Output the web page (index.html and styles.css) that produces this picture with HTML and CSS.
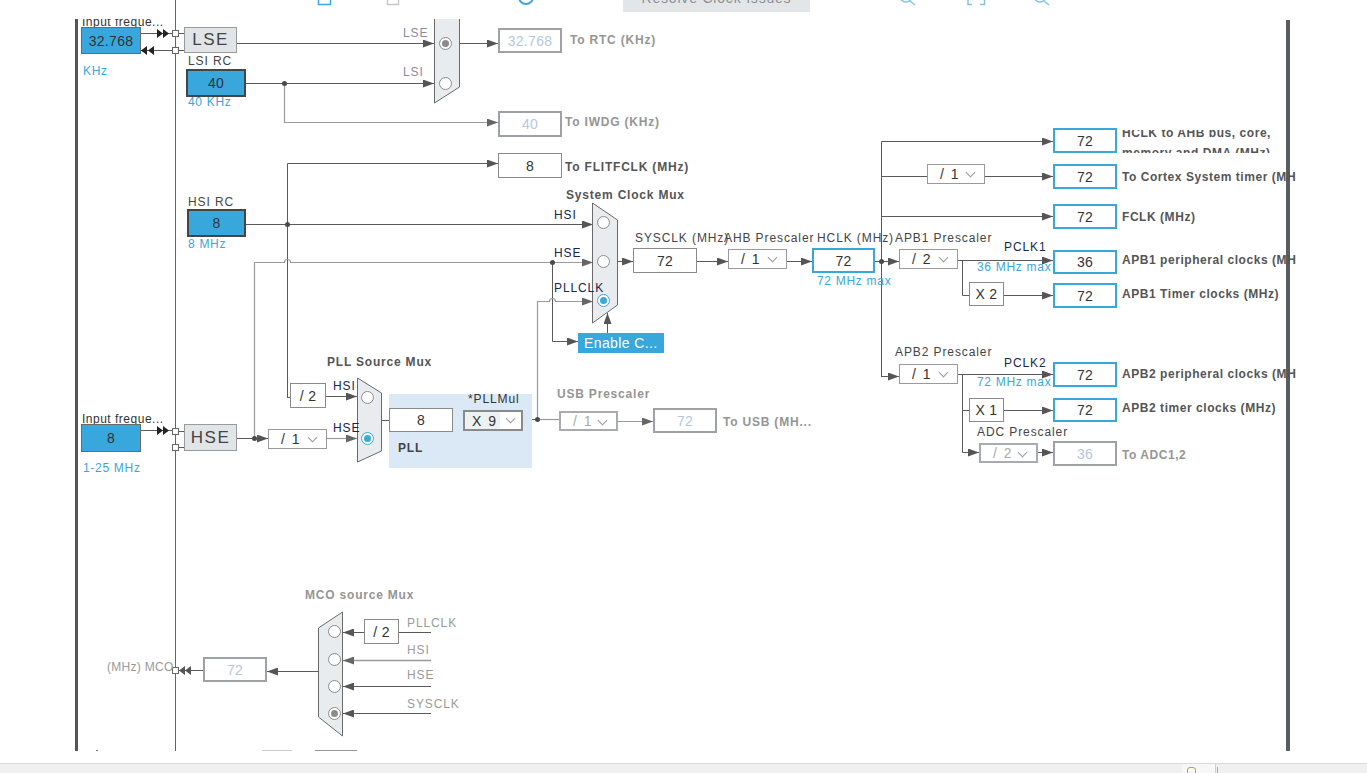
FILE: index.html
```html
<!DOCTYPE html>
<html>
<head>
<meta charset="utf-8">
<title>Clock Configuration</title>
<link rel="stylesheet" href="styles.css">
</head>
<body>
<div class="app">
  <div class="toolbar">
    <svg class="tb-svg" width="1367" height="19" viewBox="0 0 1367 19">
      <path d="M318.5,-2 V4.5 H330.5 V-2" stroke="#3aa8dc" stroke-width="1.5" fill="none"/>
      <path d="M387.5,-2 V4.5 H398.5 V-2" stroke="#c8c8c8" stroke-width="1.5" fill="none"/>
      <circle cx="526" cy="-3" r="7" stroke="#3aa8dc" stroke-width="2" fill="none"/>
      <circle cx="906" cy="-4" r="6" stroke="#7fc3e8" stroke-width="1.5" fill="none"/>
      <path d="M910,1 L915,5" stroke="#7fc3e8" stroke-width="1.5"/>
      <path d="M968,-2 V4.5 H972 M980,4.5 H984.5 V-2" stroke="#7fc3e8" stroke-width="1.5" fill="none"/>
      <circle cx="1040" cy="-4" r="6" stroke="#7fc3e8" stroke-width="1.5" fill="none"/>
      <path d="M1044,1 L1049,5" stroke="#7fc3e8" stroke-width="1.5"/>
      <line x1="175.5" y1="0" x2="175.5" y2="19" stroke="#666"/>
    </svg>
    <div class="resolve"><span>Resolve Clock Issues</span></div>
  </div>

  <div class="main">
    <div class="board">
      <svg class="wires" width="1367" height="751" viewBox="0 0 1367 751">
        <defs>
          <marker id="ad" viewBox="0 0 11 8" refX="11" refY="4" markerWidth="11" markerHeight="8" markerUnits="userSpaceOnUse" orient="auto">
            <path d="M0,0 L11,4 L0,8 z" fill="#555"/>
          </marker>
          <marker id="al" viewBox="0 0 11 8" refX="11" refY="4" markerWidth="11" markerHeight="8" markerUnits="userSpaceOnUse" orient="auto">
            <path d="M0,0 L11,4 L0,8 z" fill="#666"/>
          </marker>
        </defs>

        <!-- frame bars and bus -->
        <rect x="75" y="18" width="3" height="733" fill="#555"/>
        <rect x="1286" y="20" width="4" height="731" fill="#5b5e61"/>
        <line x1="175.5" y1="0" x2="175.5" y2="751" stroke="#666"/>

        <g fill="none" stroke="#5a5a5a" stroke-width="1">
          <!-- LSE / LSI -->
          <path d="M237,43.5 H434" marker-end="url(#ad)"/>
          <path d="M246,83.5 H434" marker-end="url(#ad)"/>
          <path d="M460,43.5 H498" marker-end="url(#ad)"/>
          <!-- HSI -->
          <path d="M246,224.5 H593" marker-end="url(#ad)"/>
          <path d="M287.5,397.5 V163.5 H498" marker-end="url(#ad)"/>
          <path d="M287,397.5 H290"/>
          <path d="M552.5,262 V341.5 H578" marker-end="url(#ad)"/>
          <path d="M607.5,333 V313" marker-end="url(#ad)"/>
          <path d="M237,438.5 H268" marker-end="url(#ad)"/>
          <path d="M326,396.5 H357" marker-end="url(#ad)"/>
          <path d="M382,420.5 H389"/>
          <path d="M453,420.5 H463"/>
          <path d="M523,419.5 H559"/>
          <path d="M618,261.5 H633" marker-end="url(#ad)"/>
          <path d="M697,261.5 H728" marker-end="url(#ad)"/>
          <path d="M787,261.5 H812" marker-end="url(#ad)"/>
          <path d="M875,261.5 H899" marker-end="url(#ad)"/>
          <path d="M881.5,376.5 V141.5 H1053" marker-end="url(#ad)"/>
          <path d="M881,376.5 H899" marker-end="url(#ad)"/>
          <path d="M881,176.5 H927"/>
          <path d="M985,176.5 H1053" marker-end="url(#ad)"/>
          <path d="M881,216.5 H1053" marker-end="url(#ad)"/>
          <path d="M958,260.5 H1053" marker-end="url(#ad)"/>
          <path d="M962.5,260 V295.5 H969"/>
          <path d="M1004,295.5 H1053" marker-end="url(#ad)"/>
          <path d="M958,374.5 H1053" marker-end="url(#ad)"/>
          <path d="M962.5,374 V452.5 H979" marker-end="url(#ad)"/>
          <path d="M962,410.5 H969"/>
          <path d="M1004,410.5 H1053" marker-end="url(#ad)"/>
          <path d="M1038,452.5 H1053" marker-end="url(#ad)"/>
          <!-- MCO -->
          <path d="M431,632.5 H399"/>
          <path d="M364,632.5 H343" marker-end="url(#ad)"/>
          <path d="M431,686.5 H343" marker-end="url(#ad)"/>
          <path d="M431,713.5 H343" marker-end="url(#ad)"/>
          <path d="M318,671.5 H267" marker-end="url(#ad)"/>
          <path d="M203,670.5 H178"/>
          <!-- pins -->
          <path d="M141,33.5 H172"/>
          <path d="M141,50.5 H172"/>
          <path d="M141,430.5 H172"/>
          <path d="M178,33.5 H184 M178,50.5 H184 M178,431.5 H184 M178,447.5 H184"/>
        </g>

        <g fill="none" stroke="#9a9a9a" stroke-width="1.2">
          <path d="M284.5,83 V122.5 H498" marker-end="url(#al)"/>
          <path d="M254.5,438 V262.5 H284.5 A3,3 0 0 1 290.5,262.5 H593" marker-end="url(#al)"/>
          <path d="M537.5,419 V301.5 H549.5 A3,3 0 0 1 555.5,301.5 H593" marker-end="url(#al)"/>
          <path d="M327,438.5 H357" marker-end="url(#al)"/>
          <path d="M537,419.5 H559"/>
          <path d="M618,421.5 H653" marker-end="url(#al)"/>
          <path d="M431,660.5 H343" stroke-width="1.6" marker-end="url(#al)"/>
        </g>

        <!-- double arrowheads -->
        <g fill="#222">
          <path d="M157,29 L163,33.5 L157,38 z M163,29 L169,33.5 L163,38 z"/>
          <path d="M147,46 L141,50.5 L147,55 z M154,46 L148,50.5 L154,55 z"/>
          <path d="M157,426 L163,430.5 L157,435 z M163,426 L169,430.5 L163,435 z"/>
        </g>
        <g fill="#555">
          <path d="M185,666 L179,670.5 L185,675 z M191,666 L185,670.5 L191,675 z"/>
        </g>

        <!-- pins -->
        <g fill="#fff" stroke="#666">
          <rect x="172.5" y="30.5" width="6" height="6"/>
          <rect x="172.5" y="47.5" width="6" height="6"/>
          <rect x="172.5" y="428.5" width="6" height="6"/>
          <rect x="172.5" y="444.5" width="6" height="6"/>
          <rect x="172.5" y="667.5" width="6" height="6"/>
        </g>

        <!-- muxes -->
        <g fill="#e9ecef" stroke="#6a6a6a">
          <polygon points="434.5,5 459.5,5 459.5,87 434.5,103"/>
          <polygon points="592.5,203 617.5,220 617.5,305 592.5,323"/>
          <polygon points="357.5,378 381.5,393 381.5,451 357.5,462"/>
          <polygon points="318.5,628 342.5,612 342.5,736 318.5,717"/>
        </g>

        <!-- radios -->
        <g fill="#fff" stroke="#8c8c8c">
          <circle cx="445.5" cy="43.5" r="6"/>
          <circle cx="445.5" cy="83.5" r="6"/>
          <circle cx="603.5" cy="222.5" r="6"/>
          <circle cx="603.5" cy="261.5" r="6"/>
          <circle cx="367.5" cy="397.5" r="6"/>
          <circle cx="334.5" cy="631.5" r="6"/>
          <circle cx="334.5" cy="659.5" r="6"/>
          <circle cx="334.5" cy="686.5" r="6"/>
          <circle cx="334.5" cy="713.5" r="6"/>
        </g>
        <g fill="#fff" stroke="#3aa8dc">
          <circle cx="603.5" cy="300.5" r="6"/>
          <circle cx="367.5" cy="438.5" r="6"/>
        </g>
        <circle cx="603.5" cy="300.5" r="3.5" fill="#3aa8dc"/>
        <circle cx="367.5" cy="438.5" r="3.5" fill="#3aa8dc"/>
        <circle cx="445.5" cy="43.5" r="3.5" fill="#8c8c8c"/>
        <circle cx="334.5" cy="713.5" r="3.5" fill="#8c8c8c"/>

        <!-- junction dots -->
        <g fill="#4a4a4a">
          <circle cx="284.5" cy="83.5" r="2.5"/>
          <circle cx="287.5" cy="224.5" r="2.5"/>
          <circle cx="552.5" cy="262.5" r="2.5"/>
          <circle cx="254.5" cy="438.5" r="2.5"/>
          <circle cx="537.5" cy="419.5" r="2.5"/>
          <circle cx="881.5" cy="261.5" r="2.5"/>
        </g>

        <!-- cut-off fragments at bottom edge -->
        <g stroke="#777">
          <path d="M96,750.5 H98"/>
          <path d="M262,750.5 H292" stroke="#ccc"/>
          <path d="M315,750.5 H357" stroke="#999"/>
        </g>
      </svg>

      <!-- LSE / LSI area -->
      <div class="t c-inf1">Input freque...</div>
      <div class="box in n-in32">32.768</div>
      <div class="t blue c-khz">KHz</div>
      <div class="box gray n-lse">LSE</div>
      <div class="t c-lsirc">LSI RC</div>
      <div class="box in thick n-lsi">40</div>
      <div class="t blue c-40k">40 KHz</div>
      <div class="t mux c-mlse">LSE</div>
      <div class="t mux c-mlsi">LSI</div>
      <div class="box dis n-rtc">32.768</div>
      <div class="t tb gray-b c-rtc">To RTC (KHz)</div>
      <div class="box dis n-iwdg">40</div>
      <div class="t tb gray-b c-iwdg">To IWDG (KHz)</div>
      <div class="box n-flit">8</div>
      <div class="t tb c-flit">To FLITFCLK (MHz)</div>

      <!-- HSI / HSE area -->
      <div class="t c-hsirc">HSI RC</div>
      <div class="box in thick n-hsi">8</div>
      <div class="t blue c-8m">8 MHz</div>
      <div class="t tb c-scm">System Clock Mux</div>
      <div class="t navy c-shsi">HSI</div>
      <div class="t navy c-shse">HSE</div>
      <div class="t navy c-spll">PLLCLK</div>
      <div class="btn n-css">Enable C...</div>

      <div class="t c-inf2">Input freque...</div>
      <div class="box in n-hsein">8</div>
      <div class="t blue c-125">1-25 MHz</div>
      <div class="box gray n-hse">HSE</div>
      <div class="box dd n-hsediv">/ 1<span class="chev"></span></div>
      <div class="box n-div2">/ 2</div>
      <div class="t tb c-psm">PLL Source Mux</div>
      <div class="t navy c-phsi">HSI</div>
      <div class="t navy c-phse">HSE</div>

      <div class="pll-area">
        <div class="t c-pllmul">*PLLMul</div>
        <div class="box n-pll8">8</div>
        <div class="box dd x9 n-x9">X 9<span class="chev-wrap"><span class="chev"></span></span></div>
        <div class="t tb dark c-pll">PLL</div>
      </div>

      <!-- USB -->
      <div class="t tb gray-b c-usbp">USB Prescaler</div>
      <div class="box dd dis-dd n-usbdd">/ 1<span class="chev"></span></div>
      <div class="box dis n-usb">72</div>
      <div class="t tb gray-b c-usb">To USB (MH...</div>

      <!-- SYSCLK / AHB -->
      <div class="t c-sysclk">SYSCLK (MHz)</div>
      <div class="box n-sysclk">72</div>
      <div class="t c-ahbp">AHB Prescaler</div>
      <div class="box dd n-ahb">/ 1<span class="chev"></span></div>
      <div class="t c-hclk">HCLK (MHz)</div>
      <div class="box out n-hclk">72</div>
      <div class="t blue c-72max">72 MHz max</div>

      <!-- right side -->
      <div class="box out n-r1">72</div>
      <div class="rl rl-ahb"><div class="rl-inner">HCLK to AHB bus, core,<br>memory and DMA (MHz)</div></div>
      <div class="box dd n-cdd">/ 1<span class="chev"></span></div>
      <div class="box out n-r2">72</div>
      <div class="t tb rl c-r2">To Cortex System timer (MHz)</div>
      <div class="box out n-r3">72</div>
      <div class="t tb rl c-r3">FCLK (MHz)</div>

      <div class="t c-apb1p">APB1 Prescaler</div>
      <div class="box dd n-apb1">/ 2<span class="chev"></span></div>
      <div class="t navy c-pclk1">PCLK1</div>
      <div class="t blue c-36max">36 MHz max</div>
      <div class="box out n-r4">36</div>
      <div class="t tb rl c-r4">APB1 peripheral clocks (MHz)</div>
      <div class="box n-x2">X 2</div>
      <div class="box out n-r5">72</div>
      <div class="t tb rl c-r5">APB1 Timer clocks (MHz)</div>

      <div class="t c-apb2p">APB2 Prescaler</div>
      <div class="box dd n-apb2">/ 1<span class="chev"></span></div>
      <div class="t navy c-pclk2">PCLK2</div>
      <div class="t blue c-72max2">72 MHz max</div>
      <div class="box out n-r6">72</div>
      <div class="t tb rl c-r6">APB2 peripheral clocks (MHz)</div>
      <div class="box n-x1">X 1</div>
      <div class="box out n-r7">72</div>
      <div class="t tb rl c-r7">APB2 timer clocks (MHz)</div>
      <div class="t c-adcp">ADC Prescaler</div>
      <div class="box dd dis-dd n-adcdd">/ 2<span class="chev"></span></div>
      <div class="box dis n-r8">36</div>
      <div class="t tb rl gray-b c-r8">To ADC1,2</div>

      <!-- MCO -->
      <div class="t tb gray-b c-mcom">MCO source Mux</div>
      <div class="box n-mdiv2">/ 2</div>
      <div class="t mux2 c-mpll">PLLCLK</div>
      <div class="t mux2 c-mhsi">HSI</div>
      <div class="t mux2 c-mhse">HSE</div>
      <div class="t mux2 c-msys">SYSCLK</div>
      <div class="box dis n-mco">72</div>
      <div class="t mux2 c-mco">(MHz) MCO</div>
    </div>
  </div>

  <div class="gap"></div>
  <div class="status">
    <div class="status-tab"><span class="tab-icon"></span></div>
    <div class="status-mark"></div>
  </div>
</div>
</body>
</html>
```

FILE: styles.css
```css
html, body {
  margin: 0;
  padding: 0;
  background: #fff;
}

.app {
  width: 1367px;
  height: 773px;
  overflow: hidden;
  display: flex;
  flex-direction: column;
  font-family: "Liberation Sans", Arial, sans-serif;
}

/* ---------- toolbar (cut off at top) ---------- */
.toolbar {
  position: relative;
  height: 19px;
  flex: none;
  overflow: hidden;
}
.tb-svg {
  position: absolute;
  left: 0;
  top: 0;
}
.resolve {
  position: absolute;
  left: 623px;
  top: 0;
  width: 187px;
  height: 12px;
  background: #e3e6e9;
  overflow: hidden;
  text-align: center;
}
.resolve span {
  display: block;
  margin-top: -11px;
  font-size: 14px;
  line-height: 18px;
  letter-spacing: 0.8px;
  color: #8a8f94;
}

/* ---------- diagram ---------- */
.main {
  position: relative;
  height: 732px;
  flex: none;
  overflow: hidden;
}
.board {
  position: absolute;
  left: 0;
  top: -19px;
  width: 1296px;
  height: 751px;
  overflow: hidden;
}
.wires {
  position: absolute;
  left: 0;
  top: 0;
}

.box {
  position: absolute;
  box-sizing: border-box;
  border: 1px solid #8a8a8a;
  background: #fff;
  color: #333;
  font-size: 14px;
  display: flex;
  align-items: center;
  justify-content: center;
  letter-spacing: 0.3px;
}
.box.in {
  background: #38a7dc;
  border-color: #6b6b6b;
  color: #333;
}
.box.in.thick {
  border: 2px solid #454545;
}
.box.gray {
  background: #e2e5e8;
  border-color: #9a9a9a;
  color: #444;
  font-size: 17px;
  letter-spacing: 1.5px;
}
.box.out {
  border: 2px solid #38a7dc;
  color: #333;
}
.box.dis {
  border: 2px solid #9ea2a6;
  color: #b5c7dd;
}
.box.dd {
  justify-content: flex-start;
  padding-left: 12px;
  letter-spacing: 1.5px;
  border-color: #9a9a9a;
}
.box.dis-dd {
  color: #aaa;
  border: 2px solid #a8acb0;
}
.chev {
  position: absolute;
  right: 10px;
  top: 4px;
  width: 6px;
  height: 6px;
  border-right: 1px solid #9a9a9a;
  border-bottom: 1px solid #9a9a9a;
  transform: rotate(45deg);
}
.box.x9 {
  border: 2px solid #8a8a8a;
  background: #eef1f4;
  padding-left: 7px;
}
.chev-wrap {
  position: absolute;
  right: 0;
  top: 0;
  bottom: 0;
  width: 21px;
  background: #fff;
}
.chev-wrap .chev {
  right: 7px;
  top: 3px;
}

.btn {
  position: absolute;
  box-sizing: border-box;
  background: #38a7dc;
  color: #fff;
  font-size: 14px;
  letter-spacing: 0.4px;
  padding-left: 6px;
  display: flex;
  align-items: center;
}

.pll-area {
  position: absolute;
  left: 389px;
  top: 394px;
  width: 143px;
  height: 74px;
  background: #dbe9f6;
}

/* labels */
.t {
  position: absolute;
  font-size: 12px;
  line-height: 14px;
  white-space: nowrap;
  color: #444;
  letter-spacing: 0.9px;
}
.t.tb {
  font-weight: bold;
  color: #555;
  letter-spacing: 0.8px;
}
.t.tb.gray-b {
  color: #959595;
}
.t.tb.dark {
  color: #444;
}
.t.blue {
  color: #38a7dc;
  letter-spacing: 0.7px;
}
.t.navy {
  color: #142850;
}
.t.mux {
  color: #8d8a9e;
}
.t.mux2 {
  color: #9a9a9a;
}

.rl {
  position: absolute;
  width: 174px;
  overflow: hidden;
  white-space: nowrap;
}
.t.tb.rl {
  letter-spacing: 0.55px;
}
.rl-ahb {
  left: 1122px;
  top: 130px;
  height: 23px;
  font-size: 12px;
  font-weight: bold;
  color: #555;
  letter-spacing: 0.55px;
}
.rl-inner {
  margin-top: -7px;
  line-height: 20px;
}

/* ---- node positions (diagram canvas coordinates) ---- */
.n-in32 { left: 81px; top: 27px; width: 60px; height: 27px; }
.n-lse { left: 184px; top: 27px; width: 53px; height: 26px; }
.n-lsi { left: 186px; top: 69px; width: 60px; height: 28px; }
.n-rtc { left: 498px; top: 28px; width: 64px; height: 25px; }
.n-iwdg { left: 498px; top: 111px; width: 64px; height: 26px; }
.n-flit { left: 498px; top: 153px; width: 64px; height: 25px; }
.n-hsi { left: 187px; top: 209px; width: 59px; height: 28px; }
.n-css { left: 578px; top: 333px; width: 86px; height: 20px; }
.n-hsein { left: 81px; top: 424px; width: 60px; height: 28px; }
.n-hse { left: 184px; top: 424px; width: 53px; height: 27px; }
.n-hsediv { left: 268px; top: 429px; width: 59px; height: 20px; }
.n-div2 { left: 290px; top: 383px; width: 36px; height: 25px; }
.n-pll8 { left: 0; top: 14px; width: 64px; height: 24px; }
.n-x9 { left: 74px; top: 16px; width: 60px; height: 21px; }
.n-usbdd { left: 559px; top: 411px; width: 59px; height: 20px; }
.n-usb { left: 653px; top: 408px; width: 64px; height: 25px; }
.n-sysclk { left: 633px; top: 248px; width: 64px; height: 25px; }
.n-ahb { left: 728px; top: 249px; width: 59px; height: 20px; }
.n-hclk { left: 812px; top: 248px; width: 63px; height: 25px; }
.n-r1 { left: 1053px; top: 128px; width: 64px; height: 25px; }
.n-cdd { left: 927px; top: 164px; width: 58px; height: 20px; }
.n-r2 { left: 1053px; top: 164px; width: 64px; height: 25px; }
.n-r3 { left: 1053px; top: 204px; width: 64px; height: 25px; }
.n-apb1 { left: 899px; top: 249px; width: 59px; height: 20px; }
.n-r4 { left: 1053px; top: 250px; width: 64px; height: 24px; }
.n-x2 { left: 969px; top: 282px; width: 35px; height: 24px; }
.n-r5 { left: 1053px; top: 283px; width: 64px; height: 25px; }
.n-apb2 { left: 899px; top: 364px; width: 59px; height: 20px; }
.n-r6 { left: 1053px; top: 362px; width: 64px; height: 25px; }
.n-x1 { left: 969px; top: 398px; width: 35px; height: 24px; }
.n-r7 { left: 1053px; top: 398px; width: 64px; height: 24px; }
.n-adcdd { left: 979px; top: 443px; width: 59px; height: 20px; }
.n-r8 { left: 1053px; top: 441px; width: 64px; height: 25px; }
.n-mdiv2 { left: 364px; top: 619px; width: 35px; height: 25px; }
.n-mco { left: 203px; top: 657px; width: 64px; height: 25px; }

/* label positions */
.c-inf1 { left: 82px; top: 15px; letter-spacing: 0.5px; color: #333; }
.c-khz { left: 83px; top: 64px; }
.c-lsirc { left: 188px; top: 54px; }
.c-40k { left: 188px; top: 95px; }
.c-mlse { left: 403px; top: 26px; }
.c-mlsi { left: 403px; top: 65px; }
.c-rtc { left: 570px; top: 33px; }
.c-iwdg { left: 565px; top: 115px; }
.c-flit { left: 565px; top: 160px; }
.c-hsirc { left: 188px; top: 195px; }
.c-8m { left: 188px; top: 237px; }
.c-scm { left: 566px; top: 188px; }
.c-shsi { left: 554px; top: 208px; }
.c-shse { left: 554px; top: 246px; }
.c-spll { left: 554px; top: 281px; }
.c-inf2 { left: 82px; top: 412px; letter-spacing: 0.5px; color: #333; }
.c-125 { left: 83px; top: 461px; }
.c-psm { left: 327px; top: 355px; }
.c-phsi { left: 333px; top: 379px; }
.c-phse { left: 333px; top: 421px; }
.c-pllmul { left: 79px; top: -2px; color: #333; }
.c-pll { left: 9px; top: 47px; }
.c-usbp { left: 557px; top: 387px; }
.c-usb { left: 723px; top: 415px; }
.c-sysclk { left: 635px; top: 231px; }
.c-ahbp { left: 724px; top: 231px; }
.c-hclk { left: 817px; top: 231px; }
.c-72max { left: 817px; top: 274px; }
.c-r2 { left: 1122px; top: 170px; }
.c-r3 { left: 1122px; top: 210px; }
.c-apb1p { left: 895px; top: 231px; }
.c-pclk1 { left: 1004px; top: 240px; }
.c-36max { left: 977px; top: 260px; }
.c-r4 { left: 1122px; top: 253px; }
.c-r5 { left: 1122px; top: 287px; }
.c-apb2p { left: 895px; top: 345px; }
.c-pclk2 { left: 1004px; top: 356px; }
.c-72max2 { left: 977px; top: 375px; }
.c-r6 { left: 1122px; top: 367px; }
.c-r7 { left: 1122px; top: 401px; }
.c-adcp { left: 977px; top: 425px; }
.c-r8 { left: 1122px; top: 448px; }
.c-mcom { left: 305px; top: 588px; }
.c-mpll { left: 407px; top: 616px; }
.c-mhsi { left: 407px; top: 643px; }
.c-mhse { left: 407px; top: 668px; }
.c-msys { left: 407px; top: 697px; }
.c-mco { left: 107px; top: 660px; letter-spacing: 0.3px; }

/* ---------- bottom strip ---------- */
.gap {
  height: 12px;
  flex: none;
}
.status {
  position: relative;
  flex: 1;
  background: #f0f0f0;
  border-top: 1px solid #d9d9d9;
}
.status-tab {
  position: absolute;
  left: 1182px;
  top: 0;
  width: 33px;
  height: 10px;
  background: #f7f7f7;
  border-right: 1px solid #cfcfcf;
}
.tab-icon {
  position: absolute;
  left: 5px;
  top: 3px;
  width: 7px;
  height: 7px;
  border: 1px solid #c9a227;
  border-radius: 3px 3px 0 0;
}
.status-mark {
  position: absolute;
  left: 1217px;
  top: 3px;
  width: 1px;
  height: 6px;
  background: #aaa;
}
```
